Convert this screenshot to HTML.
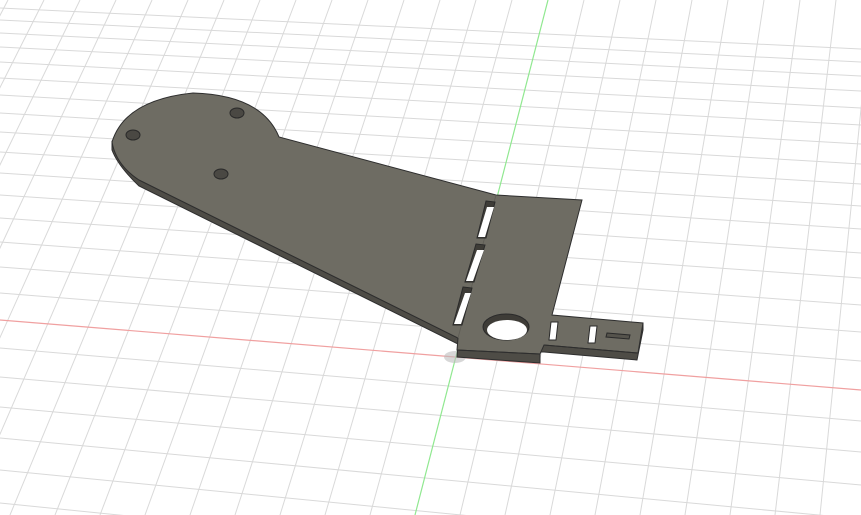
<!DOCTYPE html>
<html><head><meta charset="utf-8"><style>html,body{margin:0;padding:0;background:#fff;overflow:hidden;width:861px;height:515px}svg{display:block}</style></head>
<body>
<svg width="861" height="515" viewBox="0 0 861 515" xmlns="http://www.w3.org/2000/svg">
<rect width="861" height="515" fill="#fff"/>
<g stroke="#d9d9d9" stroke-width="1" fill="none">
<line x1="-28" y1="0" x2="-305" y2="515"/><line x1="8" y1="0" x2="-260" y2="515"/><line x1="44" y1="0" x2="-215" y2="515"/><line x1="80" y1="0" x2="-170" y2="515"/><line x1="116" y1="0" x2="-125" y2="515"/><line x1="152" y1="0" x2="-80" y2="515"/><line x1="188" y1="0" x2="-35" y2="515"/><line x1="224" y1="0" x2="10" y2="515"/><line x1="260" y1="0" x2="55" y2="515"/><line x1="296" y1="0" x2="100" y2="515"/><line x1="332" y1="0" x2="145" y2="515"/><line x1="368" y1="0" x2="190" y2="515"/><line x1="404" y1="0" x2="235" y2="515"/><line x1="440" y1="0" x2="280" y2="515"/><line x1="476" y1="0" x2="325" y2="515"/><line x1="512" y1="0" x2="370" y2="515"/><line x1="584" y1="0" x2="460" y2="515"/><line x1="620" y1="0" x2="505" y2="515"/><line x1="656" y1="0" x2="550" y2="515"/><line x1="692" y1="0" x2="595" y2="515"/><line x1="728" y1="0" x2="640" y2="515"/><line x1="764" y1="0" x2="685" y2="515"/><line x1="800" y1="0" x2="730" y2="515"/><line x1="836" y1="0" x2="775" y2="515"/><line x1="872" y1="0" x2="820" y2="515"/><line x1="908" y1="0" x2="865" y2="515"/>
<line x1="0" y1="8" x2="861" y2="49"/><line x1="0" y1="20" x2="861" y2="62"/><line x1="0" y1="33" x2="861" y2="76"/><line x1="0" y1="47" x2="861" y2="91"/><line x1="0" y1="62" x2="861" y2="108"/><line x1="0" y1="78" x2="861" y2="125"/><line x1="0" y1="95" x2="861" y2="144"/><line x1="0" y1="113" x2="861" y2="164"/><line x1="0" y1="132" x2="861" y2="184"/><line x1="0" y1="152" x2="861" y2="206"/><line x1="0" y1="173" x2="861" y2="229"/><line x1="0" y1="195" x2="861" y2="253"/><line x1="0" y1="218" x2="861" y2="278"/><line x1="0" y1="242" x2="861" y2="305"/><line x1="0" y1="267" x2="861" y2="332"/><line x1="0" y1="293" x2="861" y2="361"/><line x1="0" y1="348" x2="861" y2="421"/><line x1="0" y1="377" x2="861" y2="452"/><line x1="0" y1="407" x2="861" y2="485"/><line x1="0" y1="438" x2="861" y2="519"/><line x1="0" y1="470" x2="861" y2="554"/><line x1="0" y1="503" x2="861" y2="590"/>
</g>
<line x1="0" y1="320" x2="861" y2="390" stroke="#f0a0a0" stroke-width="1.2"/>
<line x1="548" y1="0" x2="415" y2="515" stroke="#90e890" stroke-width="1.2"/>
<ellipse cx="455" cy="357" rx="11" ry="6" fill="#bdbdbd" opacity="0.6"/>
<path d="M112,142 L112,150 Q118,166 139,186 L458,344 L457,357 L540,363 L540,352 L544,352 L637,360 L643,330 L643,323 L458,338 L139,180 Z" fill="#4e4c46" stroke="#2e2e2e" stroke-width="1"/>
<path d="M112,142 Q125,100 193,93 Q262,95 279,137 L496,195 L582,200 L552,315 L643,323 L638,353 L544,345 L540,354 L457,350 L458,338 L139,180 Q116,165 112,142 Z" fill="#6e6c63" stroke="#2e2e2e" stroke-width="1"/>
<line x1="457" y1="350" x2="540" y2="354" stroke="#2e2e2e"/>
<line x1="544" y1="345" x2="638" y2="353" stroke="#2e2e2e"/>
<line x1="496" y1="195" x2="458" y2="338" stroke="#5e5c55" stroke-width="0.8"/>
<g fill="#4a4843" stroke="#2a2a2a" stroke-width="1">
<ellipse cx="133" cy="135" rx="7" ry="5"/><ellipse cx="237" cy="113" rx="7" ry="5"/><ellipse cx="221" cy="174" rx="7" ry="5"/>
</g>
<ellipse cx="506" cy="327" rx="23" ry="13" fill="#3e3c37" stroke="#2a2a2a"/>
<ellipse cx="507" cy="330" rx="20" ry="10" fill="#fff"/>
<g fill="#3e3c37" stroke="#2a2a2a" stroke-width="1">
<path d="M486,201 L495,202 L486,238 L477,238 Z"/>
<path d="M476,244 L485,245 L474,282 L465,282 Z"/>
<path d="M463,287 L472,288 L462,325 L453,325 Z"/>
</g>
<g fill="#fff">
<path d="M487,207 L494,207 L485,237 L478,237 Z"/>
<path d="M477,250 L484,250 L473,281 L466,281 Z"/>
<path d="M465,293 L471,293 L461,324 L454,324 Z"/>
</g>
<g fill="#fff" stroke="#2a2a2a" stroke-width="1">
<path d="M551,322 L558,322 L556,340 L549,340 Z"/>
<path d="M590,326 L597,326 L595,343 L588,343 Z"/>
</g>
<path d="M607,333 L630,335 L629,339 L606,337 Z" fill="#55534c" stroke="#2a2a2a"/>
</svg>
</body></html>
